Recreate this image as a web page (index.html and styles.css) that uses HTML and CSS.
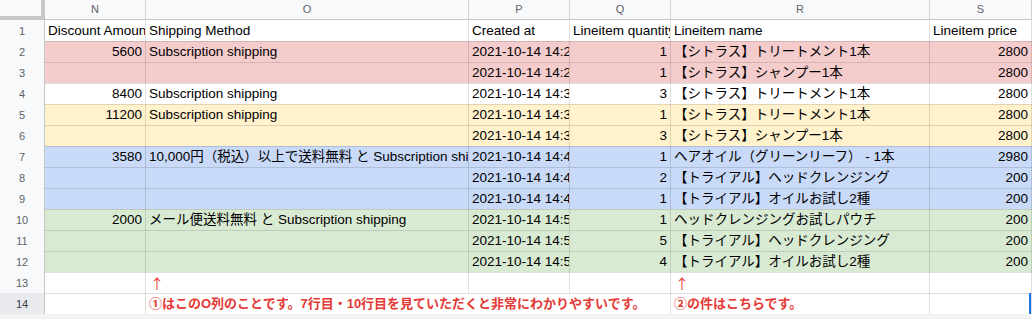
FILE: index.html
```html
<!DOCTYPE html>
<html lang="ja">
<head>
<meta charset="utf-8">
<link rel="stylesheet" href="styles.css">
</head>
<body>
<div class="sheet">
  <div class="row head">
    <div class="corner"></div>
    <div class="ch">N</div><div class="ch">O</div><div class="ch">P</div><div class="ch">Q</div><div class="ch">R</div><div class="ch">S</div>
  </div>
  <div class="row">
    <div class="rh">1</div>
    <div class="c">Discount Amount</div><div class="c">Shipping Method</div><div class="c">Created at</div><div class="c">Lineitem quantity</div><div class="c">Lineitem name</div><div class="c">Lineitem price</div>
  </div>
  <div class="row pk">
    <div class="rh">2</div>
    <div class="c n">5600</div><div class="c">Subscription shipping</div><div class="c">2021-10-14 14:2</div><div class="c n">1</div><div class="c">【シトラス】トリートメント1本</div><div class="c n">2800</div>
  </div>
  <div class="row pk">
    <div class="rh">3</div>
    <div class="c n"></div><div class="c"></div><div class="c">2021-10-14 14:2</div><div class="c n">1</div><div class="c">【シトラス】シャンプー1本</div><div class="c n">2800</div>
  </div>
  <div class="row">
    <div class="rh">4</div>
    <div class="c n">8400</div><div class="c">Subscription shipping</div><div class="c">2021-10-14 14:3</div><div class="c n">3</div><div class="c">【シトラス】トリートメント1本</div><div class="c n">2800</div>
  </div>
  <div class="row yl">
    <div class="rh">5</div>
    <div class="c n">11200</div><div class="c">Subscription shipping</div><div class="c">2021-10-14 14:3</div><div class="c n">1</div><div class="c">【シトラス】トリートメント1本</div><div class="c n">2800</div>
  </div>
  <div class="row yl">
    <div class="rh">6</div>
    <div class="c n"></div><div class="c"></div><div class="c">2021-10-14 14:3</div><div class="c n">3</div><div class="c">【シトラス】シャンプー1本</div><div class="c n">2800</div>
  </div>
  <div class="row bl">
    <div class="rh">7</div>
    <div class="c n">3580</div><div class="c">10,000円（税込）以上で送料無料 と Subscription shipping</div><div class="c">2021-10-14 14:4</div><div class="c n">1</div><div class="c">ヘアオイル（グリーンリーフ） - 1本</div><div class="c n">2980</div>
  </div>
  <div class="row bl">
    <div class="rh">8</div>
    <div class="c n"></div><div class="c"></div><div class="c">2021-10-14 14:4</div><div class="c n">2</div><div class="c">【トライアル】ヘッドクレンジング</div><div class="c n">200</div>
  </div>
  <div class="row bl">
    <div class="rh">9</div>
    <div class="c n"></div><div class="c"></div><div class="c">2021-10-14 14:4</div><div class="c n">1</div><div class="c">【トライアル】オイルお試し2種</div><div class="c n">200</div>
  </div>
  <div class="row gr">
    <div class="rh">10</div>
    <div class="c n">2000</div><div class="c">メール便送料無料 と Subscription shipping</div><div class="c">2021-10-14 14:5</div><div class="c n">1</div><div class="c">ヘッドクレンジングお試しパウチ</div><div class="c n">200</div>
  </div>
  <div class="row gr">
    <div class="rh">11</div>
    <div class="c n"></div><div class="c"></div><div class="c">2021-10-14 14:5</div><div class="c n">5</div><div class="c">【トライアル】ヘッドクレンジング</div><div class="c n">200</div>
  </div>
  <div class="row gr">
    <div class="rh">12</div>
    <div class="c n"></div><div class="c"></div><div class="c">2021-10-14 14:5</div><div class="c n">4</div><div class="c">【トライアル】オイルお試し2種</div><div class="c n">200</div>
  </div>
  <div class="row">
    <div class="rh">13</div>
    <div class="c"></div><div class="c arrow">↑</div><div class="c"></div><div class="c"></div><div class="c arrow">↑</div><div class="c"></div>
  </div>
  <div class="row last">
    <div class="rh sel">14</div>
    <div class="c"></div><div class="c note span3">①はこのO列のことです。7行目・10行目を見ていただくと非常にわかりやすいです。</div><div class="c note">②の件はこちらです。</div><div class="c edge"></div>
  </div>
</div>
</body>
</html>
```

FILE: styles.css
```css
* { box-sizing: border-box; }

body {
  margin: 0;
  background: #f1f3f4;
  font-family: "Liberation Sans", Arial, "Noto Sans CJK JP", sans-serif;
  font-size: 13px;
  color: #000;
}

.sheet {
  width: 1032px;
  overflow: hidden;
}

.row {
  display: grid;
  grid-template-columns: 45px 101px 323px 101px 101px 259px 102px;
  height: 21px;
  background: #fff;
}

.row.pk { background: #f4cccc; }
.row.yl { background: #fff2cc; }
.row.bl { background: #c9daf8; }
.row.gr { background: #d9ead3; }

.row.head {
  height: 20px;
  background: #f8f9fa;
}

.corner {
  background: #f8f9fa;
  border-right: 4px solid #c4c7c5;
  border-bottom: 4px solid #c4c7c5;
}

.ch {
  border-right: 1px solid #d0d2d4;
  border-bottom: 1px solid #c4c7c5;
  font-size: 11px;
  color: #5f6368;
  text-align: center;
  line-height: 19px;
}

.rh {
  background: #f8f9fa;
  border-right: 1px solid #c4c7c5;
  border-bottom: 1px solid #d6d8da;
  font-size: 11px;
  color: #5f6368;
  text-align: center;
  line-height: 20px;
  padding-top: 1px;
}

.rh.sel {
  background: #e8eaed;
  color: #3c4043;
}

.c {
  border-right: 1px solid rgba(0, 0, 0, 0.12);
  border-bottom: 1px solid rgba(0, 0, 0, 0.12);
  padding: 2px 3px 0;
  font-size: 13.5px;
  line-height: 18px;
  white-space: nowrap;
  overflow: hidden;
  font-family: "Liberation Sans", Arial, "Noto Sans CJK JP", sans-serif;
}

.c.n { text-align: right; }

.c.note {
  color: #e53935;
  font-weight: bold;
  font-size: 13px;
}

.c.arrow {
  color: #e53935;
  font-family: "Noto Sans CJK JP", sans-serif;
  font-size: 14px;
  padding-left: 4px;
}

.span3 { grid-column: span 3; }

.row.last .c,
.row.last .rh { border-bottom-color: #c4c7c5; }

.c.edge { box-shadow: inset -2px 0 0 #1a73e8; }
```
